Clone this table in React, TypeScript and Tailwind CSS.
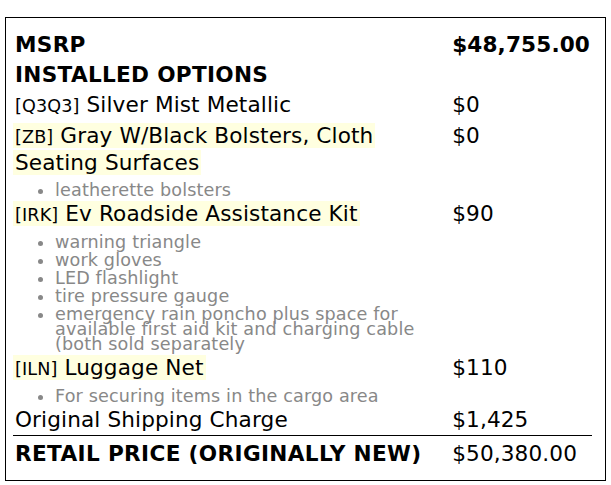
import React from 'react';

type Item = {
  code: string;
  name: string;
  price: string;
  hl?: boolean;
  notes?: string[];
};

const items: Item[] = [
  { code: '[Q3Q3]', name: 'Silver Mist Metallic', price: '$0' },
  {
    code: '[ZB]',
    name: 'Gray W/Black Bolsters, Cloth Seating Surfaces',
    price: '$0',
    hl: true,
    notes: ['leatherette bolsters'],
  },
  {
    code: '[IRK]',
    name: 'Ev Roadside Assistance Kit',
    price: '$90',
    hl: true,
    notes: [
      'warning triangle',
      'work gloves',
      'LED flashlight',
      'tire pressure gauge',
      'emergency rain poncho plus space for available first aid kit and charging cable (both sold separately',
    ],
  },
  {
    code: '[ILN]',
    name: 'Luggage Net',
    price: '$110',
    hl: true,
    notes: ['For securing items in the cargo area'],
  },
];

const Notes = ({ notes }: { notes: string[] }) => (
  <tr>
    <td className="px-[2px] pt-[2px] pb-[1px]">
      <ul className="list-disc pl-10 text-[#888] text-[17.6px] leading-[15px] tracking-[0.14px]">
        {notes.map((n) => (
          <li key={n} className="mt-[3px]">
            {n}
          </li>
        ))}
      </ul>
    </td>
    <td />
  </tr>
);

export default function App() {
  return (
    <div className="ml-[5px] mt-[17px] w-[601px] h-[464px] border border-black pl-[7px] pt-[11.5px] text-black font-['DejaVu_Sans',sans-serif]">
      <table className="w-[579px] text-[21.6px] leading-[26px] tracking-[0.12px]">
        <tbody>
          <tr className="font-bold">
            <td className="p-[2px] tracking-[0.3px]">MSRP</td>
            <td className="p-[2px] whitespace-nowrap">$48,755.00</td>
          </tr>
          <tr className="font-bold">
            <td className="p-[2px] tracking-[0.3px]" colSpan={2}>
              INSTALLED OPTIONS
            </td>
          </tr>
          {items.map((it) => (
            <React.Fragment key={it.code}>
              <tr>
                <td className="p-[2px] align-top">
                  <span
                    className={
                      it.hl
                        ? 'bg-[#ffffe0] -mx-[2px] px-[2px] box-decoration-clone'
                        : ''
                    }
                  >
                    <span className="text-[17.6px]">{it.code}</span> {it.name}
                  </span>
                </td>
                <td className="p-[2px] align-top">{it.price}</td>
              </tr>
              {it.notes && <Notes notes={it.notes} />}
            </React.Fragment>
          ))}
          <tr>
            <td className="p-[2px]">Original Shipping Charge</td>
            <td className="p-[2px]">$1,425</td>
          </tr>
          <tr className="border-t border-black">
            <td className="px-[2px] pt-[5.5px] pb-[2px] font-bold tracking-[0.35px]">
              RETAIL PRICE (ORIGINALLY NEW)
            </td>
            <td className="px-[2px] pt-[5.5px] pb-[2px] whitespace-nowrap">$50,380.00</td>
          </tr>
        </tbody>
      </table>
    </div>
  );
}
